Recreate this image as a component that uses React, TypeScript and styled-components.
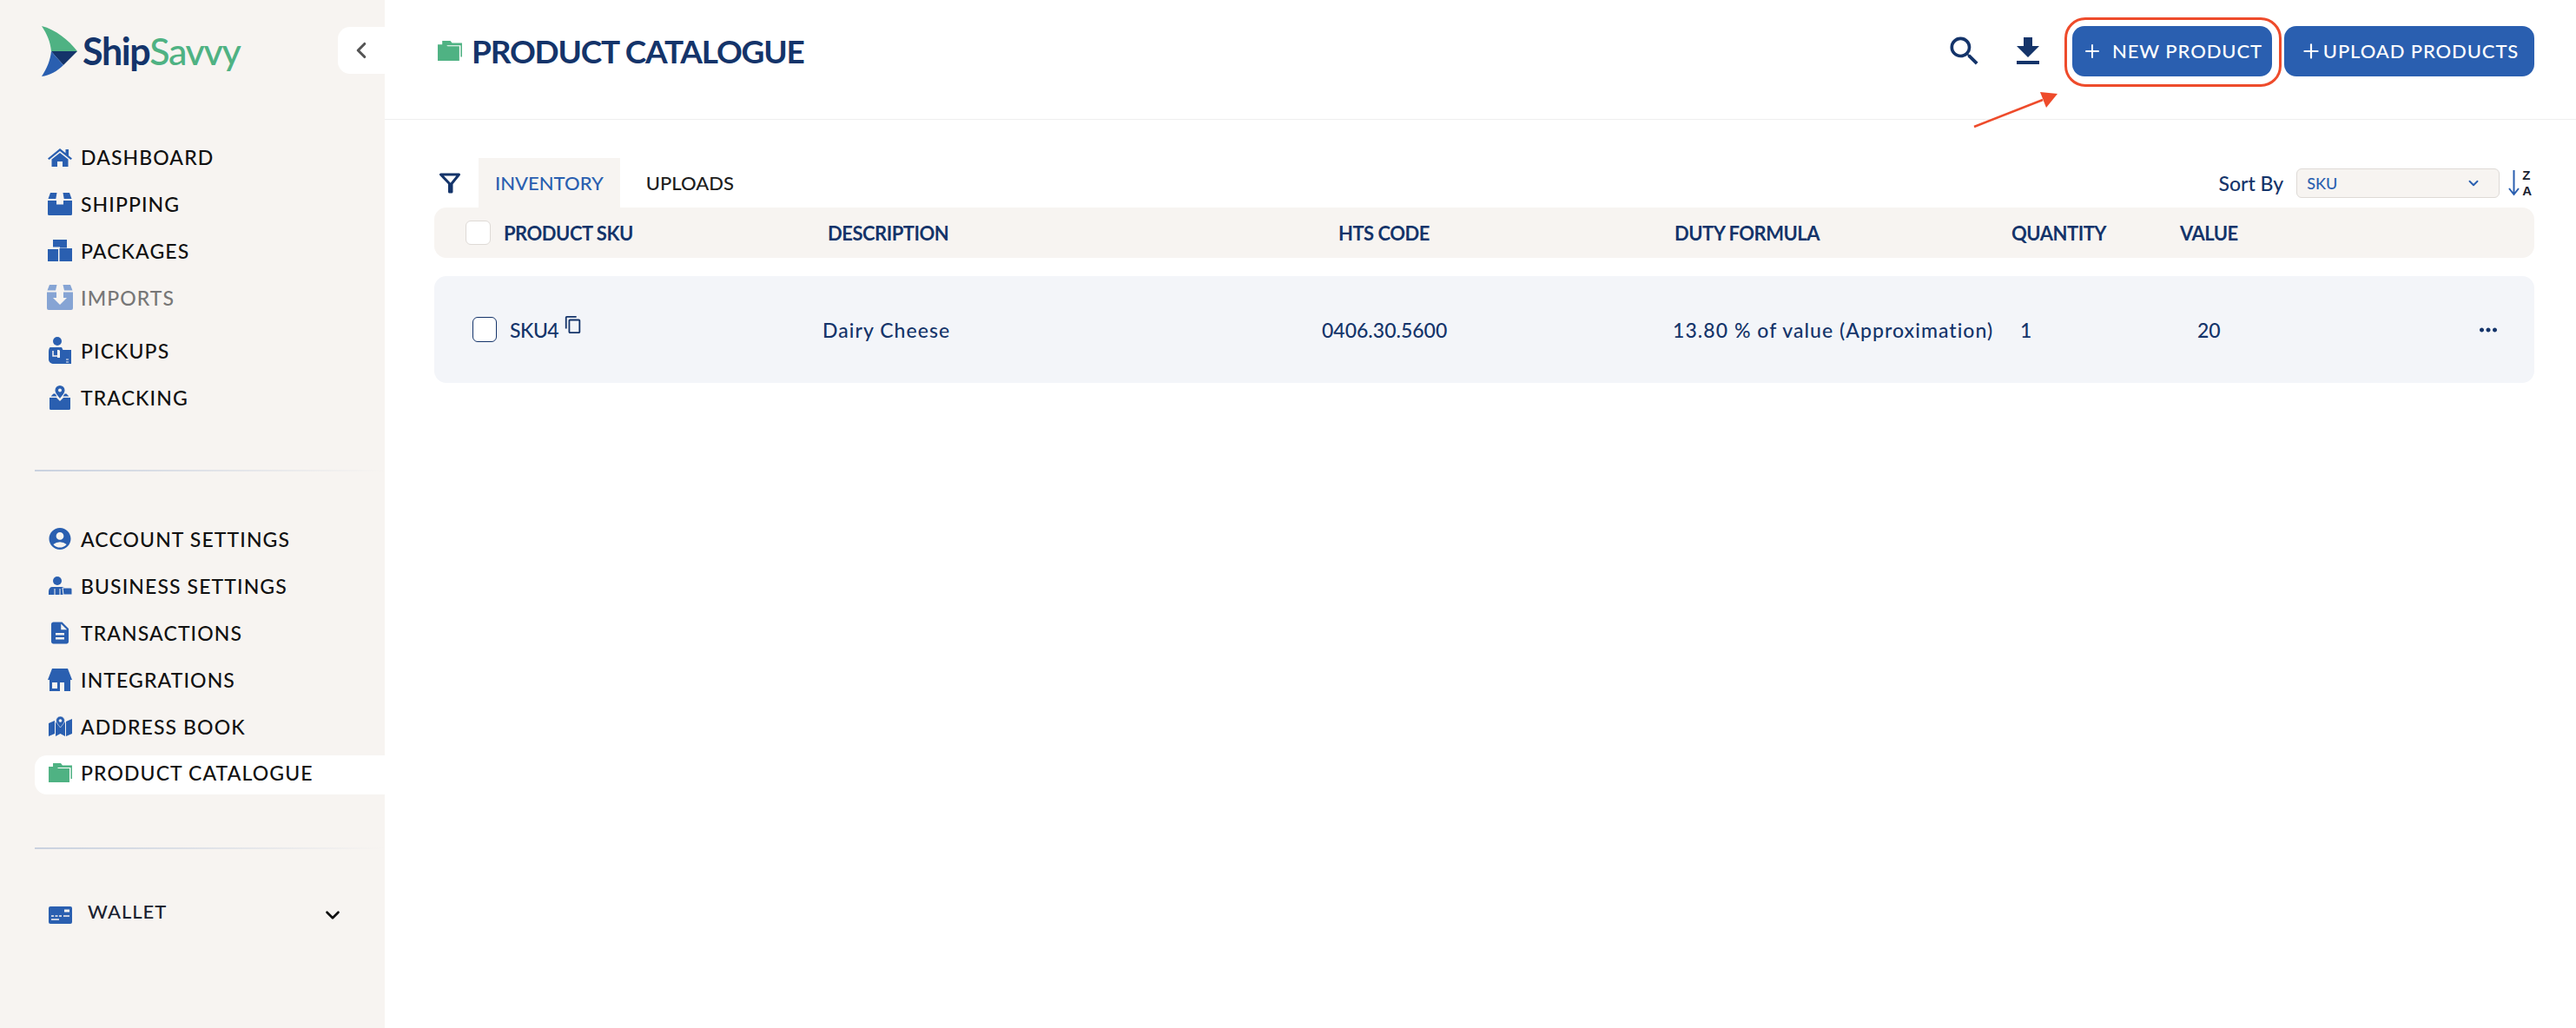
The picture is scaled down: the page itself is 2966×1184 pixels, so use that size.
import React from "react";
import styled, { createGlobalStyle } from "styled-components";
import { ChevronDown, ChevronLeft, Plus } from "lucide-react";
import { MdAccountCircle, MdDescription, MdMoreHoriz, MdOutlineContentCopy, MdSearch } from "react-icons/md";

const NAVY = "#14346a";
const BLUE = "#2a5fb0";
const GREEN = "#4fb283";
const SAND = "#f7f4f1";
const RED = "#ee4b2b";

const GlobalStyle = createGlobalStyle`
  html, body {
    margin: 0;
    padding: 0;
    background: #fff;
    font-family: "Lato", "Liberation Sans", sans-serif;
  }
  * { box-sizing: border-box; }
`;

const HomeIcon = () => (
  <svg width="28" height="22" viewBox="0 0 28 22" fill={BLUE}>
    <path d="M14 1L0 12.500l1.500 1.500L14 4l12.500 10 1.500-1.500-4-3.300V2h-3.500v4.300z" />
    <path d="M14 6L4.500 13.500V22h6.500v-6h6v6h6.500v-8.500z" />
  </svg>
);

const BoxIcon = () => (
  <svg width="28" height="26" viewBox="0 0 28 26" fill={BLUE}>
    <path d="M3 0h7.500L9.300 7H0.500zM17.500 0H25l2.500 7h-8.800z" />
    <path d="M0 9h10v4.500h8V9h10v15.500a1.500 1.500 0 0 1-1.500 1.500h-25A1.500 1.500 0 0 1 0 24.500z" />
  </svg>
);

const PackagesIcon = () => (
  <svg width="28" height="25" viewBox="0 0 28 25" fill={BLUE}>
    <path d="M6 0h16v9.500h-8v-1H6zM0 11h12v14H0zM13.500 10H28v15H13.500z" />
  </svg>
);

const ImportIcon = () => (
  <svg width="30" height="29" viewBox="0 0 30 29" fill="#86a4d4">
    <path d="M3 0h8.500L10 6.500H0.500zM18.500 0H27l2.500 6.500H20z" />
    <path d="M0 8.500h11V15H7l8 8 8-8h-4V8.500h11V27a2 2 0 0 1-2 2H2a2 2 0 0 1-2-2z" />
  </svg>
);

const PickupIcon = () => (
  <svg width="26" height="31" viewBox="0 0 26 31" fill={BLUE}>
    <circle cx="10" cy="5" r="5" />
    <path d="M2 12h13l1.500 3H10v9h6v7H6c-3 0-6-2-6-5v-9c0-3 1-5 2-5z" />
    <path d="M12 15h14v16H12v-5h1v-10z" />
    <path d="M5 16v6h7" fill="none" stroke="#f7f4f1" strokeWidth="1.500" />
    <path d="M20 26h3M20 29h3" stroke="#f7f4f1" strokeWidth="1.200" />
  </svg>
);

const TrackingIcon = () => (
  <svg width="24" height="28" viewBox="0 0 24 28" fill={BLUE}>
    <path fillRule="evenodd" d="M12 0a5.500 5.500 0 0 1 5.500 5.500C17.500 9 14 12 12 15c-2-3-5.500-6-5.500-9.500A5.500 5.500 0 0 1 12 0zm0 3.500a2 2 0 1 0 0 4 2 2 0 0 0 0-4z" />
    <path d="M4.500 9.500h2l2 3H1.500zM17.500 9.500h2l3 3h-7z" />
    <path d="M0 14h8l4 4 4-4h8v12.500a1.500 1.500 0 0 1-1.500 1.500h-21A1.500 1.500 0 0 1 0 26.500z" />
  </svg>
);

const BusinessIcon = () => (
  <svg width="27" height="21" viewBox="0 0 27 21" fill={BLUE}>
    <circle cx="10" cy="5" r="5" />
    <path d="M4 12h12c2 0 3 2 3 4v5H0v-4c0-3 2-5 4-5z" />
    <path d="M16 13h9c1 0 2 1 2 2v6H17z" stroke="#f7f4f1" strokeWidth="1" />
    <path d="M7 14v7M13 14v7" stroke="#f7f4f1" strokeWidth="1" />
  </svg>
);

const StoreIcon = () => (
  <svg width="28" height="26" viewBox="0 0 28 26" fill={BLUE}>
    <path fillRule="evenodd" d="M5 0h18l5 13h-2v13h-7V16h-5v10H2V13H0zM5 16v7h6v-7z" />
  </svg>
);

const AddressIcon = () => (
  <svg width="27" height="23" viewBox="0 0 27 23" fill={BLUE}>
    <path d="M0 8l7-3v15l-7 3zM20 6l7-3v17l-7 3zM8 7l2.500-1 3 5 3-5L19 7v16l-5.500-3L8 23z" />
    <path fillRule="evenodd" d="M13.500 0a5 5 0 0 1 5 5c0 2.500-3 5-5 8-2-3-5-5.500-5-8a5 5 0 0 1 5-5zm0 3.500a1.500 1.500 0 1 0 0 3 1.500 1.500 0 0 0 0-3z" stroke="#f7f4f1" strokeWidth="0.600" />
  </svg>
);

const FolderIcon = ({ size = 27 }: { size?: number }) => (
  <svg width={size} height={size * 0.85} viewBox="0 0 27 23" fill={GREEN}>
    <path d="M5 0h9l2 2.500h11V18h-1.500V5H5z" />
    <path d="M0 4h9l2 2h13v17H1a1 1 0 0 1-1-1z" />
  </svg>
);

const WalletIcon = () => (
  <svg width="27" height="20" viewBox="0 0 27 20" fill={BLUE}>
    <rect width="27" height="20" rx="2" />
    <path d="M18 5h6" stroke="#f7f4f1" strokeWidth="3" />
    <path d="M3 11h3M7.500 11h3M12 11h3M17 11h7M3 15h9" stroke="#f7f4f1" strokeWidth="1.400" />
  </svg>
);

const FilterIcon = () => (
  <svg width="24" height="24" viewBox="0 0 24 24" fill="none" stroke={NAVY} strokeWidth="3" strokeLinecap="round" strokeLinejoin="round">
    <path d="M1.500 2h21L14 12.500V22h-2.500v-9.500z" />
  </svg>
);

const DownloadIcon = () => (
  <svg width="26" height="31" viewBox="0 0 26 31" fill={NAVY}>
    <path d="M8 0h10v10h8L13 23 0 10h8zM0 27h26v4H0z" />
  </svg>
);

function Logo() {
  return (
    <LogoWrap>
      <svg width="41" height="58" viewBox="0 0 41 58">
        <path fill={GREEN} d="M0 0C16 4 31 16 41 29H11C10 18 6 9 0 0Z" />
        <path fill={NAVY} d="M11 29H41L25 45C20 39 15 34 11 29Z" />
        <path fill={BLUE} d="M11 29C15 34 20 39 25 45C18 52 9 57 0 58C6 49 10 39 11 29Z" />
      </svg>
      <LogoText>
        Ship<LogoAccent>Savvy</LogoAccent>
      </LogoText>
    </LogoWrap>
  );
}

const mainNav = [
  { label: "DASHBOARD", icon: <HomeIcon /> },
  { label: "SHIPPING", icon: <BoxIcon /> },
  { label: "PACKAGES", icon: <PackagesIcon /> },
  { label: "IMPORTS", icon: <ImportIcon />, muted: true },
  { label: "PICKUPS", icon: <PickupIcon /> },
  { label: "TRACKING", icon: <TrackingIcon /> },
];

const settingsNav = [
  { label: "ACCOUNT SETTINGS", icon: <MdAccountCircle size={33} color={BLUE} /> },
  { label: "BUSINESS SETTINGS", icon: <BusinessIcon /> },
  { label: "TRANSACTIONS", icon: <MdDescription size={32} color={BLUE} /> },
  { label: "INTEGRATIONS", icon: <StoreIcon /> },
  { label: "ADDRESS BOOK", icon: <AddressIcon /> },
  { label: "PRODUCT CATALOGUE", icon: <FolderIcon />, active: true },
];

function App(): JSX.Element {
  return (
    <Container>
      <GlobalStyle />
      <Sidebar>
        <SidebarTop>
          <Logo />
          <CollapseButton>
            <ChevronLeft size={30} color="#555" strokeWidth={2.5} />
          </CollapseButton>
        </SidebarTop>

        <MainNav>
          {mainNav.map((item) => (
            <NavRow key={item.label} $muted={item.muted}>
              <NavIcon>{item.icon}</NavIcon>
              {item.label}
            </NavRow>
          ))}
        </MainNav>
        <Divider />
        <SettingsNav>
          {settingsNav.map((item) => (
            <NavRow key={item.label} $active={item.active}>
              <NavIcon>{item.icon}</NavIcon>
              {item.label}
            </NavRow>
          ))}
        </SettingsNav>
        <Divider />
        <WalletRow>
          <NavIcon>
            <WalletIcon />
          </NavIcon>
          <WalletLabel>WALLET</WalletLabel>
          <ChevronDown size={26} color="#111" strokeWidth={2.5} />
        </WalletRow>
      </Sidebar>

      <Main>
        <Header>
          <Title>
            <FolderIcon size={28} />
            <h1>PRODUCT CATALOGUE</h1>
          </Title>
          <Actions>
            <IconButton>
              <MdSearch size={44} color={NAVY} />
            </IconButton>
            <IconButton>
              <DownloadIcon />
            </IconButton>
            <NewButtonWrap>
              <PrimaryButton $width={230} $gap={11}>
                <Plus size={24} strokeWidth={2} />
                <span>NEW PRODUCT</span>
              </PrimaryButton>
              <Highlight />
              <Arrow width="100" height="42" viewBox="0 0 100 42">
                <path d="M1 40L80 9" stroke={RED} strokeWidth="2.500" />
                <path d="M97 2L77 0l7 18z" fill={RED} />
              </Arrow>
            </NewButtonWrap>
            <PrimaryButton $width={288} $gap={1}>
              <Plus size={26} strokeWidth={2} />
              <span>UPLOAD PRODUCTS</span>
            </PrimaryButton>
          </Actions>
        </Header>

        <Content>
          <Toolbar>
            <FilterButton>
              <FilterIcon />
            </FilterButton>
            <Tab $active>INVENTORY</Tab>
            <Tab>UPLOADS</Tab>
            <SortArea>
              <SortLabel>Sort By</SortLabel>
              <SortSelect>
                SKU
                <ChevronDown size={18} color={BLUE} strokeWidth={2.5} />
              </SortSelect>
              <SortOrder>
                <svg width="13" height="30" viewBox="0 0 13 30" fill="none" stroke={BLUE} strokeWidth="2">
                  <path d="M6.500 0v28M1 21l5.500 7 5.500-7" />
                </svg>
                <SortLetters>
                  <span>Z</span>
                  <span>A</span>
                </SortLetters>
              </SortOrder>
            </SortArea>
          </Toolbar>

          <TableHead>
            <HeadCheck />
            <span>PRODUCT SKU</span>
            <span>DESCRIPTION</span>
            <span>HTS CODE</span>
            <span>DUTY FORMULA</span>
            <span>QUANTITY</span>
            <span>VALUE</span>
          </TableHead>

          <TableRow>
            <RowCheck />
            <SkuCell>
              SKU4
              <MdOutlineContentCopy size={22} color={NAVY} />
            </SkuCell>
            <WideText>Dairy Cheese</WideText>
            <span>0406.30.5600</span>
            <WideText>13.80 % of value (Approximation)</WideText>
            <span>1</span>
            <span>20</span>
            <MdMoreHoriz size={30} color={NAVY} />
          </TableRow>
        </Content>
      </Main>
    </Container>
  );
}

const Container = styled.div`
  display: flex;
  width: 100vw;
  height: 100vh;
  overflow: hidden;
  background: #fff;
`;

const Sidebar = styled.div`
  width: 443px;
  flex-shrink: 0;
  height: 100%;
  background: ${SAND};
  padding-left: 40px;
`;

const SidebarTop = styled.div`
  display: flex;
  justify-content: space-between;
  align-items: flex-start;
  height: 124px;
  padding-top: 30px;
`;

const LogoWrap = styled.div`
  display: flex;
  align-items: center;
  gap: 6px;
  padding-left: 8px;
`;

const LogoText = styled.div`
  font-size: 43px;
  font-weight: 700;
  letter-spacing: -1.4px;
  color: ${NAVY};
  line-height: 58px;
`;

const LogoAccent = styled.span`
  color: ${GREEN};
  font-weight: 500;
`;

const CollapseButton = styled.div`
  display: flex;
  align-items: center;
  justify-content: center;
  width: 54px;
  height: 54px;
  margin-top: 1px;
  background: #fff;
  border-radius: 14px 0 0 14px;
`;

const MainNav = styled.nav`
  display: flex;
  flex-direction: column;
  gap: 9px;
  margin-top: 34px;
`;

const SettingsNav = styled.nav`
  display: flex;
  flex-direction: column;
  gap: 9px;
  margin-top: 55px;
`;

const NavRow = styled.div<{ $muted?: boolean; $active?: boolean }>`
  display: flex;
  align-items: center;
  height: 45px;
  padding-left: 14px;
  padding-bottom: ${(p) => (p.$active ? "5px" : "0")};
  gap: 9px;
  font-size: 23px;
  font-weight: 500;
  letter-spacing: 1.1px;
  color: ${(p) => (p.$muted ? "#777" : "#111")};
  background: ${(p) => (p.$active ? "#fff" : "transparent")};
  border-radius: ${(p) => (p.$active ? "14px 0 0 14px" : "0")};
  margin-top: ${(p) => (p.$active ? "2px" : "0")};
  margin-bottom: ${(p) => (p.$muted ? "7px" : "0")};
`;

const NavIcon = styled.span`
  display: flex;
  align-items: center;
  justify-content: center;
  width: 30px;
  flex-shrink: 0;
`;

const Divider = styled.div`
  height: 2px;
  margin-top: 61px;
  background: linear-gradient(90deg, #c9d1df, ${SAND});
`;

const WalletRow = styled.div`
  display: flex;
  align-items: center;
  height: 45px;
  margin-top: 53px;
  padding: 0 47px 0 14px;
  color: #1b2230;
`;

const WalletLabel = styled.span`
  flex: 1;
  margin-left: 17px;
  margin-top: -8px;
  font-size: 22px;
  font-weight: 500;
  letter-spacing: 1px;
`;

const Main = styled.div`
  flex: 1;
  min-width: 0;
`;

const Header = styled.header`
  display: flex;
  align-items: center;
  justify-content: space-between;
  height: 138px;
  padding: 0 48px 20px 61px;
  border-bottom: 1px solid #eeeeee;
`;

const Title = styled.div`
  display: flex;
  align-items: center;
  gap: 11px;
  color: ${NAVY};

  h1 {
    margin: 0;
    font-size: 37px;
    font-weight: 700;
    letter-spacing: -1.2px;
  }
`;

const Actions = styled.div`
  display: flex;
  align-items: center;
`;

const IconButton = styled.div`
  display: flex;
  align-items: center;
  justify-content: center;
  width: 73px;
  height: 58px;
`;

const NewButtonWrap = styled.div`
  position: relative;
  margin: 0 14px 0 15px;
`;

const PrimaryButton = styled.div<{ $width: number; $gap: number }>`
  display: flex;
  align-items: center;
  justify-content: center;
  gap: ${(p) => p.$gap}px;
  width: ${(p) => p.$width}px;
  height: 58px;
  background: ${BLUE};
  border-radius: 14px;
  color: #fff;
  font-size: 22px;
  font-weight: 500;
  letter-spacing: 0.9px;
`;

const Highlight = styled.div`
  position: absolute;
  top: -10px;
  left: -9px;
  width: 250px;
  height: 80px;
  border: 3px solid ${RED};
  border-radius: 24px;
`;

const Arrow = styled.svg`
  position: absolute;
  top: 76px;
  left: -114px;
`;

const Content = styled.div`
  padding: 44px 48px 0 57px;
`;

const Toolbar = styled.div`
  display: flex;
  align-items: center;
  height: 57px;
  color: #1d1d1d;
`;

const FilterButton = styled.div`
  display: flex;
  width: 51px;
  padding-left: 6px;
`;

const Tab = styled.div<{ $active?: boolean }>`
  display: flex;
  align-items: center;
  height: 100%;
  padding: 0 19px;
  margin-right: 11px;
  background: ${(p) => (p.$active ? SAND : "transparent")};
  color: ${(p) => (p.$active ? BLUE : "#1d1d1d")};
  font-size: 22px;
  font-weight: 500;
`;

const SortArea = styled.div`
  display: flex;
  align-items: center;
  margin-left: auto;
  margin-right: 3px;
`;

const SortLabel = styled.span`
  margin-right: 15px;
  color: ${NAVY};
  font-size: 23px;
  font-weight: 500;
`;

const SortSelect = styled.div`
  display: flex;
  align-items: center;
  justify-content: space-between;
  width: 234px;
  height: 34px;
  padding: 0 20px 0 11px;
  background: ${SAND};
  border: 1px solid #dedad6;
  border-radius: 6px;
  color: ${BLUE};
  font-size: 18px;
  font-weight: 500;
`;

const SortOrder = styled.div`
  display: flex;
  align-items: center;
  gap: 3px;
  margin-left: 10px;
`;

const SortLetters = styled.div`
  display: flex;
  flex-direction: column;
  color: #1b2230;
  font-family: "Liberation Sans", sans-serif;
  font-size: 15px;
  font-weight: 700;
  line-height: 17.5px;
`;

const TableHead = styled.div`
  display: grid;
  grid-template-columns: 44px 373px 588px 387px 388px 194px 1fr;
  align-items: center;
  height: 58px;
  padding-left: 36px;
  background: ${SAND};
  border-radius: 14px;
  color: ${NAVY};
  font-size: 22px;
  font-weight: 700;
  letter-spacing: -0.5px;
`;

const HeadCheck = styled.div`
  width: 29px;
  height: 28px;
  background: #fff;
  border: 1px solid #dedad6;
  border-radius: 6px;
`;

const TableRow = styled.div`
  display: grid;
  grid-template-columns: 43px 360px 575px 404px 400px 204px 320px 1fr;
  align-items: center;
  height: 123px;
  margin-top: 21px;
  padding: 0 38px 0 44px;
  background: #f3f5f9;
  border-radius: 14px;
  color: ${NAVY};
  font-size: 23px;
  font-weight: 500;
`;

const WideText = styled.span`
  letter-spacing: 1.05px;
  white-space: nowrap;
`;

const RowCheck = styled.div`
  width: 28px;
  height: 29px;
  background: #fff;
  border: 1.5px solid ${NAVY};
  border-radius: 6px;
`;

const SkuCell = styled.div`
  display: flex;
  align-items: flex-start;
  gap: 6px;
  letter-spacing: -0.5px;

  svg {
    margin-top: -3px;
  }
`;

export default App;
